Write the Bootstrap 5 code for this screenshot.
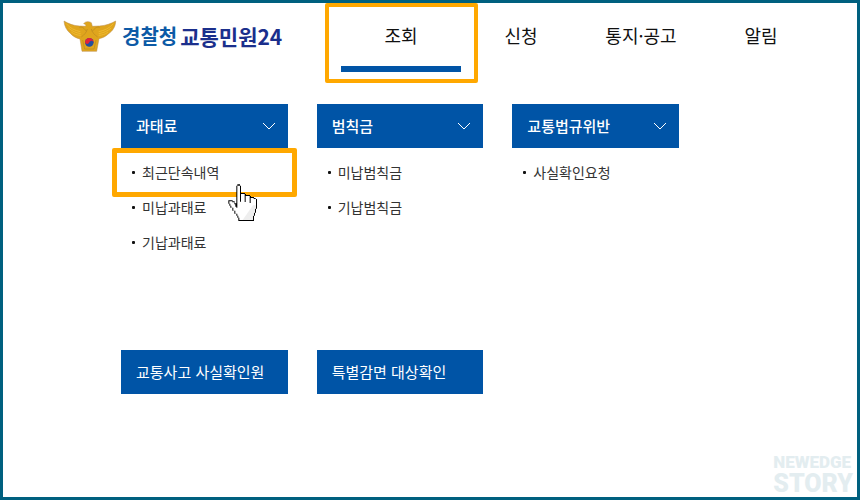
<!DOCTYPE html>
<html lang="ko">
<head>
<meta charset="utf-8">
<meta name="viewport" content="width=device-width, initial-scale=1">
<title>경찰청 교통민원24</title>
<link href="https://cdn.jsdelivr.net/npm/bootstrap@5.3.0/dist/css/bootstrap.min.css" rel="stylesheet">
<style>
body { font-family: "Noto Sans CJK KR", "Noto Sans", sans-serif; color: #111; background: #fff; }
.page-frame { border: 3px solid #00607f; }
.site-header { padding-left: 60px; padding-right: 36px; }
.brand { gap: 5px; font-size: 21px; font-weight: 700; line-height: 34px; color: #1b2f8c; padding-top: 17px; }
.brand-agency { color: #0c5aa6; font-size: 20px; }
.brand-name { gap: 3px; line-height: 32px; }
.main-nav { flex: 0 0 480px; }
.main-nav a { display: block; font-size: 18px; line-height: 26px; padding: 19px 0 18px; color: #111; text-align: center; text-decoration: none; border-bottom: 6px solid transparent; }
.main-nav a.active { border-bottom-color: #0054a6; }
.marker { position: absolute; border: 5px solid #ffa800; border-radius: 2px; pointer-events: none; }
.marker-nav { inset: 0 -17px -11px -16px; border-width: 4px; }
.marker-item { inset: -7px -9px -7px -9px; }
.menu-area { padding: 32px 178px 0 118px; }
.menu-grid { display: grid; grid-template-columns: repeat(3, 1fr); column-gap: 29px; }
.menu-head { background: #0054a6; border-radius: 0; color: #fff; font-size: 15px; line-height: 24px; padding: 10px 12px 10px 15px; border: 0; text-align: left; }
button.menu-head { font-weight: 500; }
.menu-head:hover { background: #004a94; color: #fff; }
.menu-list { padding: 7px 0 0; }
.menu-list a { display: flex; align-items: center; gap: 7px; padding-left: 11px; font-size: 14px; line-height: 35px; color: #333; text-decoration: none; }
.menu-list a::before { content: ""; width: 3px; height: 3px; border-radius: 1px; background: #111; }
.menu-links { margin-top: 90px; }
.hand { position: absolute; left: 107px; top: 29px; z-index: 2; }
.watermark { position: absolute; right: 4px; bottom: 0; color: #e3edf0; font-family: Roboto, sans-serif; font-weight: 900; }
.watermark-top { font-size: 17px; line-height: 18px; }
.watermark-bottom { font-size: 25px; line-height: 26px; }
</style>
<script src="https://cdn.jsdelivr.net/npm/bootstrap@5.3.0/dist/js/bootstrap.bundle.min.js"></script>
</head>
<body>
<div class="page-frame min-vh-100 position-relative">
  <header class="site-header d-flex justify-content-between align-items-start">
    <a class="brand d-flex text-decoration-none text-nowrap" href="#">
      <svg width="54" height="34" viewBox="24 32 162 102" aria-hidden="true">
        <path d="M27 35C40 43 55 49 73 50L91 51C94 48 93 45 86 43C91 36 100 35 109 40L112 51L133 50C153 49 169 42 182 35C182 51 173 65 161 73C153 81 143 86 132 88L125 126H81L75 89C63 86 53 80 47 73C35 64 28 50 27 35Z" fill="#dfa51d" stroke="#b88a4c" stroke-width="1.5"/>
        <path d="M34 43C45 57 59 63 76 67M40 56C52 66 62 70 77 73M49 68C59 76 66 77 77 78M175 43C163 57 149 63 131 67M169 56C156 66 146 70 131 73M159 68C150 76 142 77 131 78" fill="none" stroke="#efb92f" stroke-width="3"/>
        <path d="M73 55C81 50 88 57 94 66M134 55C126 50 119 57 112 66M79 83C88 76 94 70 97 59M128 83C118 76 112 70 109 59M83 92L89 119H117L123 92" fill="none" stroke="#b98820" stroke-width="2"/>
        <circle cx="103" cy="99" r="13" fill="#234f9e"/>
        <path d="M90 99A13 13 0 0 1 116 99C112 91 105 94 103 99C100 105 93 106 90 99Z" fill="#e32238"/>
      </svg>
      <span class="brand-name d-flex"><span class="brand-agency">경찰청</span><span>교통민원24</span></span>
    </a>
    <nav class="main-nav" aria-label="주 메뉴">
      <ul class="list-unstyled d-flex mb-0">
        <li class="position-relative w-25"><a class="active" href="#" aria-current="page">조회</a><span class="marker marker-nav"></span></li>
        <li class="w-25"><a href="#">신청</a></li>
        <li class="w-25"><a href="#">통지·공고</a></li>
        <li class="w-25"><a href="#">알림</a></li>
      </ul>
    </nav>
  </header>

  <main class="menu-area">
    <div class="menu-grid">
      <section>
        <button type="button" class="menu-head btn w-100 d-flex justify-content-between align-items-center">과태료
          <svg width="14" height="8" viewBox="0 0 14 8" fill="none" stroke="#fff" aria-hidden="true"><path d="M1 1L7 7L13 1"/></svg></button>
        <ul class="menu-list list-unstyled mb-0">
          <li class="position-relative"><a href="#">최근단속내역</a><span class="marker marker-item"></span>
            <svg class="hand" width="31" height="38" viewBox="24 28 93 114" aria-hidden="true">
              <path d="M49 33H52V29H60V33H63V55H75V58H78V61H90V64H93V67H102V70H107V73H111V102H108V114H105V123H102V139H55V129H52V123H49V117H43V108H37V99H31V93H28V87H25V77H38V80H44V86H49Z" fill="#000"/>
              <path d="M52 33H60V81H63V58H74V82H77V64H89V85H92V70H101V73H108V102H105V114H102V123H99V136H58V129H55V123H52V117H46V108H40V99H34V93H31V87H28V80H37V83H43V89H46V96H49V99H52Z" fill="#fff"/>
              <path d="M99 92H108V102H105V114H102V123H99V136H68Z" fill="#ddd" opacity=".5"/>
            </svg></li>
          <li><a href="#">미납과태료</a></li>
          <li><a href="#">기납과태료</a></li>
        </ul>
      </section>
      <section>
        <button type="button" class="menu-head btn w-100 d-flex justify-content-between align-items-center">범칙금
          <svg width="14" height="8" viewBox="0 0 14 8" fill="none" stroke="#fff" aria-hidden="true"><path d="M1 1L7 7L13 1"/></svg></button>
        <ul class="menu-list list-unstyled mb-0">
          <li><a href="#">미납범칙금</a></li>
          <li><a href="#">기납범칙금</a></li>
        </ul>
      </section>
      <section>
        <button type="button" class="menu-head btn w-100 d-flex justify-content-between align-items-center">교통법규위반
          <svg width="14" height="8" viewBox="0 0 14 8" fill="none" stroke="#fff" aria-hidden="true"><path d="M1 1L7 7L13 1"/></svg></button>
        <ul class="menu-list list-unstyled mb-0">
          <li><a href="#">사실확인요청</a></li>
        </ul>
      </section>
    </div>
    <div class="menu-grid menu-links">
      <a class="menu-head btn text-nowrap" href="#">교통사고 사실확인원</a>
      <a class="menu-head btn text-nowrap" href="#">특별감면 대상확인</a>
    </div>
  </main>

  <div class="watermark"><div class="watermark-top">NEWEDGE</div><div class="watermark-bottom">STORY</div></div>
</div>
</body>
</html>
